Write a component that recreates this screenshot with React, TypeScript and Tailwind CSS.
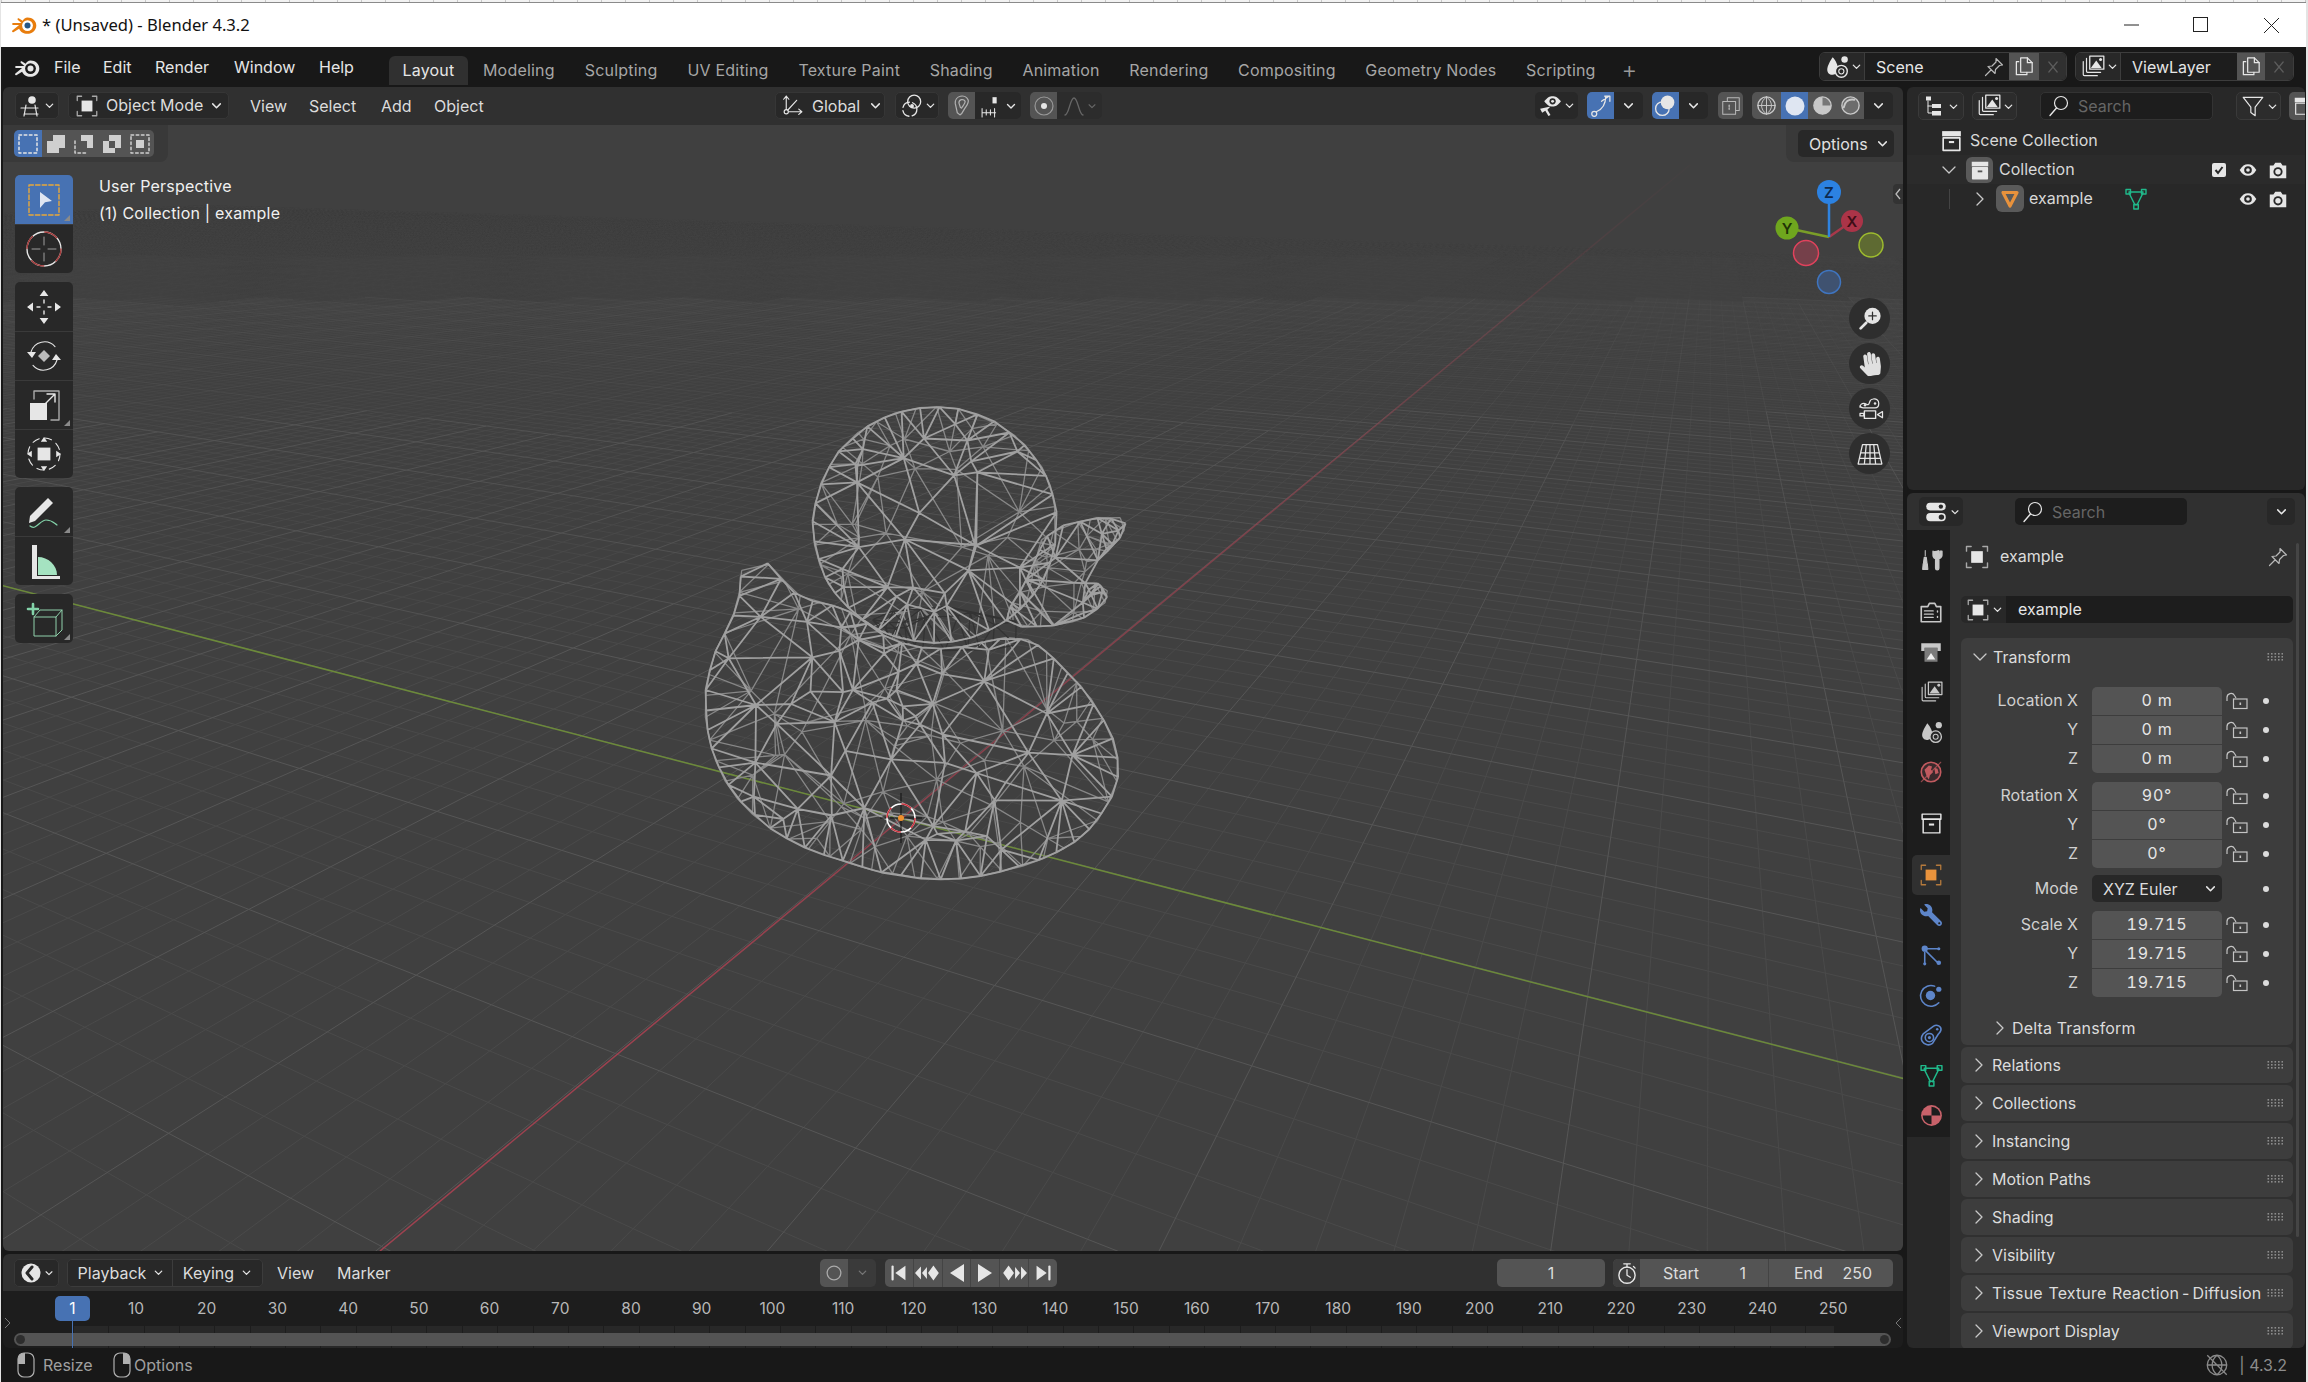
import React from "react";
import { FaHandPaper, FaWrench } from "react-icons/fa";

type P = [number, number];
const rng = (seed: number) => () => {
  seed = (seed + 0x6d2b79f5) | 0;
  let t = Math.imul(seed ^ (seed >>> 15), 1 | seed);
  t = (t + Math.imul(t ^ (t >>> 7), 61 | t)) ^ t;
  return ((t ^ (t >>> 14)) >>> 0) / 4294967296;
};
function delaunay(p: P[]) {
  const n = p.length;
  const pts: P[] = [...p, [-6000, -6000], [8000, -6000], [1000, 9000]];
  const mk = (a: number, b: number, c: number) => {
    const [ax, ay] = pts[a], [bx, by] = pts[b], [cx, cy] = pts[c];
    const d = 2 * (ax * (by - cy) + bx * (cy - ay) + cx * (ay - by));
    const A = ax * ax + ay * ay, B = bx * bx + by * by, C = cx * cx + cy * cy;
    const x = (A * (by - cy) + B * (cy - ay) + C * (ay - by)) / d;
    const y = (A * (cx - bx) + B * (ax - cx) + C * (bx - ax)) / d;
    return { a, b, c, x, y, r: (ax - x) ** 2 + (ay - y) ** 2 };
  };
  let ts = [mk(n, n + 1, n + 2)];
  for (let i = 0; i < n; i++) {
    const [x, y] = pts[i];
    const edges = new Map<string, [number, number]>();
    const good: typeof ts = [];
    for (const t of ts) {
      if ((x - t.x) ** 2 + (y - t.y) ** 2 < t.r) {
        for (const [u, v] of [[t.a, t.b], [t.b, t.c], [t.c, t.a]] as [number, number][]) {
          const k = u < v ? u + "_" + v : v + "_" + u;
          if (edges.has(k)) edges.delete(k);
          else edges.set(k, [u, v]);
        }
      } else good.push(t);
    }
    ts = good;
    edges.forEach((e) => ts.push(mk(e[0], e[1], i)));
  }
  return ts.filter((t) => t.a < n && t.b < n && t.c < n);
}
const inPoly = (q: P, poly: P[]) => {
  let c = false;
  for (let i = 0, j = poly.length - 1; i < poly.length; j = i++) {
    const [xi, yi] = poly[i], [xj, yj] = poly[j];
    if (yi > q[1] !== yj > q[1] && q[0] < ((xj - xi) * (q[1] - yi)) / (yj - yi) + xi) c = !c;
  }
  return c;
};
const chaikin = (poly: P[], times: number): P[] => {
  let cur = poly;
  for (let k = 0; k < times; k++) {
    const out: P[] = [];
    for (let i = 0; i < cur.length; i++) {
      const a = cur[i], b = cur[(i + 1) % cur.length];
      out.push([a[0] * 0.75 + b[0] * 0.25, a[1] * 0.75 + b[1] * 0.25]);
      out.push([a[0] * 0.25 + b[0] * 0.75, a[1] * 0.25 + b[1] * 0.75]);
    }
    cur = out;
  }
  return cur;
};
function mesh(poly: P[], center: P, n: number, seed: number, step: number) {
  const r = rng(seed);
  const bd: P[] = [];
  let acc = 0;
  for (let i = 0; i < poly.length; i++) {
    const a = poly[i], b = poly[(i + 1) % poly.length];
    const len = Math.hypot(b[0] - a[0], b[1] - a[1]);
    let pos = step - acc;
    while (pos < len) {
      const t = pos / len;
      bd.push([a[0] + (b[0] - a[0]) * t + (r() - 0.5) * 1.5, a[1] + (b[1] - a[1]) * t + (r() - 0.5) * 1.5]);
      pos += step * (0.7 + r() * 0.6);
    }
    acc = (acc + len) % step;
  }
  const pts: P[] = [...bd];
  for (let i = 0; i < n; i++) {
    const b = bd[Math.floor(r() * bd.length)];
    const t = Math.pow(r(), 0.55) * 0.93;
    pts.push([center[0] + (b[0] - center[0]) * t, center[1] + (b[1] - center[1]) * t]);
  }
  let d = "";
  const seen = new Set<string>();
  for (const t of delaunay(pts)) {
    const g: P = [(pts[t.a][0] + pts[t.b][0] + pts[t.c][0]) / 3, (pts[t.a][1] + pts[t.b][1] + pts[t.c][1]) / 3];
    if (!inPoly(g, poly)) continue;
    for (const [u, v] of [[t.a, t.b], [t.b, t.c], [t.c, t.a]] as [number, number][]) {
      const k = u < v ? u + "_" + v : v + "_" + u;
      if (seen.has(k)) continue;
      seen.add(k);
      d += `M${pts[u][0].toFixed(1)} ${pts[u][1].toFixed(1)}L${pts[v][0].toFixed(1)} ${pts[v][1].toFixed(1)}`;
    }
  }
  return d;
}
const F = (a: number[][]): P[] => a.map(([x, y]) => [680 + x / 3, 390 + y / 3]);
const bodyPoly = chaikin(F([[185, 515], [245, 500], [290, 550], [360, 630], [500, 650], [620, 750], [800, 790], [1030, 720], [1180, 860], [1270, 980], [1325, 1110], [1295, 1240], [1180, 1370], [1000, 1440], [800, 1475], [600, 1450], [350, 1370], [170, 1240], [90, 1080], [70, 920], [105, 780], [175, 660]]), 2);
const beakPoly = chaikin(F([[1100, 410], [1310, 375], [1345, 410], [1300, 470], [1180, 575], [1275, 585], [1290, 630], [1200, 695], [1040, 715], [960, 690], [1050, 560]]), 1);
const neckPoly = F([[560, 670], [800, 650], [1030, 700], [1000, 780], [760, 780], [620, 740]]);
const headPoly: P[] = Array.from({ length: 60 }, (_, i) => {
  const a = (i / 60) * Math.PI * 2;
  return [935 + 122 * Math.cos(a), 525 + 118 * Math.sin(a)] as P;
});
const B: P = [890, 745], H: P = [935, 525], K: P = [1080, 570];
const duckFront = [mesh(bodyPoly, B, 58, 11, 20), mesh(headPoly, H, 28, 21, 19), mesh(beakPoly, K, 14, 31, 16)];
const duckBack = [mesh(bodyPoly, B, 50, 12, 22), mesh(headPoly, H, 26, 22, 21), mesh(beakPoly, K, 12, 32, 14)];
const duckNeck = mesh(neckPoly, [880, 640], 12, 41, 26);

const VX: P = [1711, 148], VY: P = [-1687, 148], O: P = [900, 818];
function grid(k1: number, k2: number, div: number) {
  const buckets: string[] = ["", "", "", ""];
  const proj = (a: number, b: number): [number, number, number] => {
    const ka = a * k1, kb = b * k2, w = 1 + ka + kb;
    return [(O[0] + ka * VX[0] + kb * VY[0]) / w, (O[1] + ka * VX[1] + kb * VY[1]) / w, w];
  };
  const add = (a0: number, b0: number, a1: number, b1: number) => {
    const [x0, y0, w0] = proj(a0, b0), [x1, y1, w1] = proj(a1, b1);
    if (w0 < 0.12 || w1 < 0.12) return;
    const w = Math.max(w0, w1);
    if (w > 14) return;
    const i = w < 1.5 ? 0 : w < 2.6 ? 1 : w < 4.5 ? 2 : 3;
    buckets[i] += `M${x0.toFixed(1)} ${y0.toFixed(1)}L${x1.toFixed(1)} ${y1.toFixed(1)}`;
  };
  const R1 = 44, R2 = 70;
  for (let a = -R1; a <= R1; a += 1 / div) {
    if (div > 1 && Math.abs(a - Math.round(a)) < 1e-6) continue;
    for (let b = -R2; b < R2; b += 2) add(a, b, a, b + 2);
  }
  for (let b = -R2; b <= R2; b += 1 / div) {
    if (div > 1 && Math.abs(b - Math.round(b)) < 1e-6) continue;
    for (let a = -R1; a < R1; a += 2) add(a, b, a + 2, b);
  }
  return buckets;
}
const majorGrid = grid(0.13, 0.07, 1);
const minorGrid = grid(0.13, 0.07, 5);
const FADE = [1, 0.8, 0.4, 0.08];

const W = "#e6e6e6";
const Ico = ({ s = 22, children, className }: { s?: number; children: React.ReactNode; className?: string }) => (
  <svg width={s} height={s} viewBox="0 0 24 24" fill="none" stroke={W} strokeWidth={1.5} strokeLinecap="round" strokeLinejoin="round" className={"shrink-0 " + (className ?? "")}>
    {children}
  </svg>
);
const ChevD = ({ c = W, s = 13 }: { c?: string; s?: number }) => (
  <svg width={s} height={s} viewBox="0 0 12 12" fill="none" stroke={c} strokeWidth={1.4} strokeLinecap="round" strokeLinejoin="round" className="shrink-0">
    <path d="M2.5 4.5 6 8l3.5-3.5" />
  </svg>
);
const ChevR = ({ c = "#c8c8c8" }: { c?: string }) => (
  <svg width={14} height={16} viewBox="0 0 14 16" fill="none" stroke={c} strokeWidth={1.3} strokeLinecap="round" strokeLinejoin="round" className="shrink-0">
    <path d="M4 2l6 6-6 6" />
  </svg>
);
const ChevDL = ({ c = "#c8c8c8" }: { c?: string }) => (
  <svg width={16} height={14} viewBox="0 0 16 14" fill="none" stroke={c} strokeWidth={1.3} strokeLinecap="round" strokeLinejoin="round" className="shrink-0">
    <path d="M2 4l6 6 6-6" />
  </svg>
);
const Blender = ({ c = W, eye, s = 26 }: { c?: string; eye?: string; s?: number }) => (
  <svg width={s} height={s} viewBox="0 0 26 26" className="shrink-0">
    <path fill={c} d="M15.5 5.5c5 0 8.8 3.4 8.8 7.9 0 4.7-4 8.3-9 8.3-3.8 0-7-2-8.2-5L1.8 20c-.9.7-2 .1-1.7-1 .1-.3.3-.6.6-.8l6.4-5.1L1.3 13c-1.5 0-1.5-1.9 0-2h8.2L5.9 7.9c-1-.9.1-2.2 1.2-1.5l3.6 2.3c.9-1.9 2.6-3.2 4.8-3.2z" />
    <circle cx="15.5" cy="13.6" r="5.4" fill={eye ? "#fff" : "#181818"} />
    <circle cx="15.5" cy="13.6" r="3" fill={eye ?? c} />
  </svg>
);
const View3D = () => (
  <Ico s={24}>
    <circle cx="13" cy="6" r="3.8" fill={W} stroke="none" />
    <path d="M2 14h17M5 20h14M7 11l-2 11M16 11l2 11" strokeWidth={1.2} />
  </Ico>
);
const ObjBox = ({ c = W, s = 24, bc }: { c?: string; s?: number; bc?: string }) => (
  <Ico s={s}>
    <rect x="7" y="7" width="10" height="10" fill={c} stroke="none" />
    <path d="M3 7V3h4M17 3h4v4M21 17v4h-4M7 21H3v-4" stroke={bc ?? "#a8a8a8"} strokeWidth={1.2} />
  </Ico>
);
const Copy = () => (
  <Ico s={23}>
    <path d="M6 7H3.5v13.5h11V18" strokeWidth={1.3} />
    <path d="M8 3h7l5 5v10H8z" fill="none" strokeWidth={1.3} />
    <path d="M15 3v5h5" strokeWidth={1.3} />
  </Ico>
);
const PinI = ({ c = "#b8b8b8", s = 24 }: { c?: string; s?: number }) => (
  <Ico s={s}>
    <path d="M14 3.5l6.5 6.5-3 .5-4 4-.5 4-7-7 4-.5 4-4zM8.5 15.5L3.5 20.5" stroke={c} strokeWidth={1.2} />
  </Ico>
);
const XMark = ({ c = "#5c5c5c" }: { c?: string }) => (
  <Ico s={20}>
    <path d="M7 6l10 12M17 6L7 18" stroke={c} strokeWidth={1.5} />
  </Ico>
);
const SceneI = ({ s = 26, c = W }: { s?: number; c?: string }) => (
  <Ico s={s}>
    <path d="M8 3c3 3 5 8 5 11a5.2 5.2 0 0 1-4 5c-3 1-6-1.2-6-4.5C3 11 6 6 8 3z" fill={c} stroke="none" />
    <circle cx="19" cy="5" r="3" fill={c} stroke="none" />
    <circle cx="16" cy="16" r="5.5" fill="#282828" stroke={c} strokeWidth={1.3} />
    <circle cx="16" cy="16" r="2.4" stroke={c} strokeWidth={1} />
  </Ico>
);
const LayerI = ({ s = 26, c = W }: { s?: number; c?: string }) => (
  <Ico s={s}>
    <path d="M3 7v12a1 1 0 0 0 1 1h12M6 4v12a1 1 0 0 0 1 1h12" stroke={c} strokeWidth={1.1} />
    <rect x="9" y="2" width="13" height="12" fill="#282828" stroke={c} strokeWidth={1.2} />
    <path d="M10 13l5-7 5 7z" fill={c} stroke="none" />
    <circle cx="19" cy="5" r="1.4" fill={c} stroke="none" />
  </Ico>
);
const SearchI = ({ c = W, s = 24 }: { c?: string; s?: number }) => (
  <Ico s={s}>
    <circle cx="14" cy="9" r="6.5" stroke={c} strokeWidth={1.2} />
    <path d="M9.5 14L3 21.500" stroke={c} strokeWidth={1.4} />
  </Ico>
);
const Box = ({ active, s = 24 }: { active?: boolean; s?: number }) => (
  <Ico s={s}>
    <rect x="3" y="3" width="18" height="5" fill={W} stroke="none" />
    <rect x="4" y="9.5" width="16" height="12" fill={active ? W : "none"} stroke={W} strokeWidth={1.6} />
    <rect x="9.5" y="12.5" width="5" height="2" fill={active ? "#555" : W} stroke="none" />
  </Ico>
);
const EyeI = () => (
  <Ico s={20}>
    <path d="M2 12c3-5 6-7 10-7s7 2 10 7c-3 5-6 7-10 7s-7-2-10-7z" fill={W} stroke="none" />
    <circle cx="12" cy="12" r="4.6" fill="#282828" stroke="none" />
    <circle cx="12" cy="12" r="2.2" fill={W} stroke="none" />
  </Ico>
);
const CamI = () => (
  <Ico s={22}>
    <path d="M3 7h4l2-3h6l2 3h4v14H3z" fill={W} stroke="none" />
    <circle cx="12" cy="14" r="5" fill="#282828" stroke="none" />
    <circle cx="12" cy="14" r="3" fill={W} stroke="none" />
  </Ico>
);
const MeshI = ({ c = "#20b98b", s = 24 }: { c?: string; s?: number }) => (
  <Ico s={s}>
    <path d="M5 5h14M5 6l6 12M19 6l-6 12" stroke={c} strokeWidth={1.5} />
    <rect x="2" y="2.5" width="4.5" height="4.5" stroke={c} strokeWidth={1.4} />
    <rect x="17.5" y="2.5" width="4.5" height="4.5" stroke={c} strokeWidth={1.4} />
    <rect x="9.8" y="17.5" width="4.5" height="4.5" stroke={c} strokeWidth={1.4} />
  </Ico>
);
const Lock = () => (
  <svg width={22} height={18} viewBox="0 0 22 18" fill="none" stroke="#c4c4c4" strokeWidth={1.2} className="shrink-0">
    <path d="M1 9V5.5a4 4 0 0 1 7.5-2L10 6" />
    <rect x="7.5" y="7" width="13.5" height="9.5" />
    <rect x="13.5" y="10.5" width="1.6" height="2.5" fill="#c4c4c4" stroke="none" />
  </svg>
);
const Grip = () => (
  <svg width={16} height={8} viewBox="0 0 16 8" fill="#8c8c8c" className="shrink-0">
    {[0, 1, 2].map((r) => [0, 1, 2, 3, 4].map((c) => <rect key={r + "_" + c} x={c * 3.5 + 0.5} y={r * 3} width="1.6" height="1.6" />))}
  </svg>
);
const Dot = () => <span className="block w-[6px] h-[6px] rounded-full bg-[#dcdcdc] shrink-0" />;

const Seg = ({ className, children }: { className: string; children?: React.ReactNode }) => (
  <div className={"flex items-center justify-center shrink-0 " + className}>{children}</div>
);

const TABS = ["Layout", "Modeling", "Sculpting", "UV Editing", "Texture Paint", "Shading", "Animation", "Rendering", "Compositing", "Geometry Nodes", "Scripting"];

const TitleBar = () => (
  <div className="shrink-0">
    <div className="h-[3px] border-b border-[#8a8a8a] bg-[repeating-linear-gradient(90deg,#c8c8c8_0_1px,#f2f2f2_1px_24px)]" />
    <div className="h-[44px] bg-white flex items-center pl-[11px] text-[16.6px] text-[#111] font-['Noto_Sans',sans-serif] relative">
      <Blender c="#e87d0d" eye="#265787" s={26} />
      <span className="ml-[4px] pt-[1px]">* (Unsaved) - Blender 4.3.2</span>
      <div className="ml-auto flex items-center h-full">
        <svg width="16" height="16" viewBox="0 0 16 16" className="mr-[53px]"><path d="M0 8h15" stroke="#222" strokeWidth="1" /></svg>
        <svg width="16" height="16" viewBox="0 0 16 16" className="mr-[54px]"><rect x=".5" y=".5" width="14" height="14" stroke="#222" fill="none" /></svg>
        <svg width="17" height="17" viewBox="0 0 17 17" className="mr-[26px]"><path d="M1 1l15 15M16 1L1 16" stroke="#222" strokeWidth="1" /></svg>
      </div>
    </div>
  </div>
);

const TopBar = () => (
  <div className="h-[40px] shrink-0 bg-[#181818] flex text-[16px]">
    <div className="flex items-start pt-[8px] pl-[14px] w-[388px] shrink-0 text-[#e6e6e6]">
      <Blender />
      <span className="ml-[13px] w-[49px]">File</span>
      <span className="w-[52px]">Edit</span>
      <span className="w-[79px]">Render</span>
      <span className="w-[85px]">Window</span>
      <span>Help</span>
    </div>
    <div className="flex items-end h-[38px] self-start tracking-[0.2px]">
      {TABS.map((t, i) => (
        <div key={t} className={"h-[29px] flex items-center pb-[1px] rounded-t-[6px] " + (i === 0 ? "px-[13.5px] bg-[#303030] text-[#e6e6e6]" : i > 3 ? "px-[14.8px] text-[#a6a6a6]" : "px-[15px] text-[#a6a6a6]")}>{t}</div>
      ))}
      <div className="h-[29px] pl-[11px] flex items-center pb-[2px] text-[#9a9a9a] text-[24px] font-light">+</div>
    </div>
    <div className="ml-auto flex items-center text-[#e6e6e6] pb-[6px] pt-[5px] pr-[12px]">
      <div className="flex h-[29px] rounded-[6px] overflow-hidden border border-[#3d3d3d]">
        <Seg className="w-[44px] bg-[#282828] gap-[1px] pl-[2px]"><SceneI /><ChevD s={11} /></Seg>
        <div className="w-[145px] bg-[#1d1d1d] flex items-center pl-[11px] border-l border-[#3d3d3d]">
          <span>Scene</span><span className="ml-auto mr-[3px]"><PinI /></span>
        </div>
        <Seg className="w-[30px] bg-[#545454]"><Copy /></Seg>
        <Seg className="w-[27px] bg-[#303030]"><XMark /></Seg>
      </div>
      <div className="flex h-[29px] rounded-[6px] overflow-hidden border border-[#3d3d3d] ml-[8px]">
        <Seg className="w-[44px] bg-[#282828] gap-[1px] pl-[2px]"><LayerI /><ChevD s={11} /></Seg>
        <div className="w-[117px] bg-[#1d1d1d] flex items-center pl-[11px] border-l border-[#3d3d3d]">ViewLayer</div>
        <Seg className="w-[28px] bg-[#545454]"><Copy /></Seg>
        <Seg className="w-[28px] bg-[#303030]"><XMark /></Seg>
      </div>
    </div>
  </div>
);

const ModeIcon = ({ kind }: { kind: number }) => {
  const dash = <rect x="3" y="3" width="18" height="18" strokeDasharray="2.6 2.6" stroke={W} strokeWidth={1.5} fill="none" />;
  return (
    <Ico s={24}>
      {kind === 0 && dash}
      {kind === 1 && <path d="M9 3h12v13h-6v5H3V9h6z" fill="#cfcfcf" stroke="none" />}
      {kind === 2 && <><path d="M3 9v12h12" strokeDasharray="2.5 2.5" stroke="#cfcfcf" /><path d="M9 3h12v13h-6V9H9z" fill="#cfcfcf" stroke="none" /></>}
      {kind === 3 && <path fillRule="evenodd" d="M9 3h12v13h-6v5H3V9h6zM9 9v7h6V9z" fill="#cfcfcf" stroke="none" />}
      {kind === 4 && <><rect x="3" y="3" width="18" height="18" strokeDasharray="2.6 2.6" stroke="#cfcfcf" /><rect x="8" y="8" width="8" height="8" fill="#cfcfcf" stroke="none" /></>}
    </Ico>
  );
};
const ShadeGlobe = () => <Ico s={23}><circle cx="12" cy="12" r="9" stroke="#c8c8c8" /><path d="M3 12h18M12 3v18M12 3c-7 5-7 13 0 18M12 3c7 5 7 13 0 18" stroke="#c8c8c8" strokeWidth={1} /></Ico>;

const ViewHeader = () => (
  <div className="h-[38px] shrink-0 bg-[#303030] rounded-t-[6px] flex items-center text-[16px] text-[#dcdcdc] pb-[1px]">
    <Seg className="ml-[12px] w-[44px] h-[27px] bg-[#282828] rounded-[5px] border border-[#363636] gap-[1px]"><View3D /><ChevD s={11} /></Seg>
    <Seg className="ml-[9px] w-[161px] h-[27px] bg-[#282828] rounded-[5px] border border-[#363636] !justify-start pl-[5px]">
      <ObjBox s={26} /><span className="ml-[6px] w-[104px] pb-[1px]">Object Mode</span><ChevD s={13} />
    </Seg>
    <span className="ml-[21px] w-[59px]">View</span>
    <span className="w-[72px]">Select</span>
    <span className="w-[53px]">Add</span>
    <span className="w-[60px]">Object</span>

    <Seg className="ml-[281px] w-[110px] h-[27px] bg-[#282828] rounded-[5px] border border-[#363636] !justify-start pl-[4px]">
      <Ico s={25}><path d="M6 3v15h15M6 18L16 7M3.5 6L6 3l2.5 3M18 15.5l3 2.5-3 2.5" strokeWidth={1.1} /><circle cx="6" cy="18" r="2" fill="#282828" strokeWidth={1.1} /></Ico>
      <span className="ml-[7px] w-[57px]">Global</span><ChevD s={13} />
    </Seg>
    <Seg className="ml-[10px] w-[44px] h-[27px] bg-[#282828] rounded-[5px] border border-[#363636]">
      <Ico s={26}><circle cx="10" cy="15" r="6.5" strokeWidth={1.2} strokeDasharray="8 3" /><circle cx="14" cy="8" r="6" strokeWidth={1.2} /><circle cx="12" cy="12" r="1.8" fill={W} stroke="none" /></Ico>
      <ChevD s={11} />
    </Seg>
    <div className="ml-[9px] w-[73px] h-[27px] flex rounded-[5px] overflow-hidden">
      <Seg className="w-[27px] bg-[#545454]"><Ico s={25}><path d="M8 19L6 10A6.500 6.500 0 0 1 18.500 7c.5 3-2 5.500-3.500 8l-3 5-1.500 1zM11 14L9.500 9.500A3.200 3.200 0 0 1 15.500 8c.3 2-2 4-3.500 6.500" stroke="#b0b0b0" strokeWidth={1.2} /></Ico></Seg>
      <Seg className="flex-1 bg-[#282828]">
        <Ico s={25}><path d="M2 19h13M2 15v8M6 16v5M10 16v5M14 15v8" strokeWidth={1} /><rect x="12" y="4" width="4" height="6" fill={W} stroke="none" /></Ico>
        <ChevD s={12} />
      </Seg>
    </div>
    <div className="ml-[9px] w-[72px] h-[27px] flex rounded-[5px] overflow-hidden">
      <Seg className="w-[27px] bg-[#545454]"><Ico s={24}><circle cx="12" cy="12" r="9" stroke="#999" strokeWidth={1.2} /><circle cx="12" cy="12" r="3" fill={W} stroke="none" /></Ico></Seg>
      <Seg className="flex-1 bg-[#2c2c2c]"><Ico s={24}><path d="M2 21c4 0 5-17 9-17s5 17 9 17" stroke="#666" strokeWidth={1.3} /></Ico><ChevD s={10} c="#666" /></Seg>
    </div>

    <Seg className="ml-[433px] w-[43px] h-[27px] bg-[#282828] rounded-[5px] gap-[1px]">
      <Ico s={25}><path d="M3 13l10-2-3 3 3 5-2 1-3-5-3 2z" fill={W} stroke="none" transform="translate(-1 2)" /><path d="M6 8c3-4 5-5 8-5s5 1 8 5c-3 4-5 5-8 5s-5-1-8-5z" fill={W} stroke="none" /><circle cx="14" cy="8" r="3" fill="#282828" stroke="none" /><circle cx="14" cy="8" r="1.4" fill={W} stroke="none" /></Ico>
      <ChevD s={11} />
    </Seg>
    <div className="ml-[9px] w-[56px] h-[27px] flex rounded-[5px] overflow-hidden">
      <Seg className="w-[27px] bg-[#4772b3]"><Ico s={25}><circle cx="6" cy="20" r="2.4" strokeWidth={1.2} /><path d="M8 18C15 15 17 10 17 3M13 8l7-5M21 3h-5M21 3v5" strokeWidth={1.2} /></Ico></Seg>
      <Seg className="flex-1 bg-[#282828]"><ChevD s={13} /></Seg>
    </div>
    <div className="ml-[9px] w-[56px] h-[27px] flex rounded-[5px] overflow-hidden">
      <Seg className="w-[27px] bg-[#4772b3]"><Ico s={25}><circle cx="9" cy="15" r="6.5" strokeWidth={1.3} /><circle cx="14" cy="9" r="6.5" fill={W} stroke="none" /></Ico></Seg>
      <Seg className="flex-1 bg-[#282828]"><ChevD s={13} /></Seg>
    </div>
    <Seg className="ml-[10px] w-[25px] h-[27px] bg-[#545454] rounded-[5px]"><Ico s={22}><path d="M8 7V3h13v14h-4" stroke="#b8b8b8" strokeWidth={1.1} /><rect x="3" y="7" width="14" height="14" stroke="#b8b8b8" strokeWidth={1.1} /><path d="M10 11v6" stroke="#b8b8b8" strokeDasharray="1.5 1.5" /></Ico></Seg>
    <div className="ml-[9px] w-[141px] h-[27px] flex rounded-[5px] overflow-hidden">
      <Seg className="w-[29px] bg-[#545454]"><ShadeGlobe /></Seg>
      <Seg className="w-[27px] bg-[#4772b3]"><Ico s={24}><circle cx="12" cy="12" r="9.500" fill="#dfe6f2" stroke="none" /></Ico></Seg>
      <Seg className="w-[29px] bg-[#545454]"><Ico s={23}><circle cx="12" cy="12" r="9" fill="#777" stroke="#c8c8c8" /><path d="M12 3a9 9 0 1 0 9 9h-9z" fill="#c8c8c8" stroke="none" /></Ico></Seg>
      <Seg className="w-[27px] bg-[#545454]"><Ico s={23}><circle cx="12" cy="12" r="9" fill="#6c6c6c" stroke="#c8c8c8" /><path d="M5 14c1-6 5-9 11-8" stroke="#c8c8c8" strokeWidth={2} /></Ico></Seg>
      <Seg className="flex-1 bg-[#282828]"><ChevD s={13} /></Seg>
    </div>
  </div>
);

const ToolBtn = ({ children, blue, corner, top, bottom }: { children: React.ReactNode; blue?: boolean; corner?: boolean; top?: boolean; bottom?: boolean }) => (
  <div className={"w-[58px] h-[49px] flex items-center justify-center relative " + (blue ? "bg-[#4772b3] " : "bg-[#282828] ") + (top ? "rounded-t-[5px] " : "") + (bottom ? "rounded-b-[5px] " : "") + (top ? "" : "border-t border-[#3a3a3a]")}>
    {children}
    {corner && <span className="absolute right-[3px] bottom-[3px] w-0 h-0 border-l-[6px] border-l-transparent border-b-[6px] border-b-[#8a8a8a]" />}
  </div>
);

const Tools = () => (
  <div className="absolute left-[12px] top-[50px] flex flex-col">
    <div className="flex flex-col">
      <ToolBtn blue top corner>
        <Ico s={48}><rect x="4.500" y="4.500" width="15" height="15" stroke="#e8a83a" strokeWidth={.7} strokeDasharray="2.2 1.100" /><path d="M10 8l6 4.500-3.500.6-2.500 2.900z" fill="#dfe6f2" stroke="none" /></Ico>
      </ToolBtn>
      <ToolBtn bottom>
        <Ico s={48}><circle cx="12" cy="12" r="8.500" stroke={W} strokeWidth={.7} /><circle cx="12" cy="12" r="8.500" stroke="#a33a3a" strokeWidth={.7} strokeDasharray="6.700 6.700" /><path d="M12 6v4M12 14v4M6 12h4M14 12h4" stroke="#aaa" strokeWidth={.45} /></Ico>
      </ToolBtn>
    </div>
    <div className="flex flex-col mt-[9px]">
      <ToolBtn top>
        <Ico s={48}><path d="M12 3.500l2.200 3h-4.400zM12 20.500l-2.200-3h4.400zM3.500 12l3-2.200v4.400zM20.500 12l-3 2.200V9.800z" fill={W} stroke="none" /><path d="M12 8.500v1.500M12 14v1.500M8.500 12H10M14 12h1.500" strokeWidth={.7} /></Ico>
      </ToolBtn>
      <ToolBtn>
        <Ico s={48}><path d="M12 9l3 3-3 3-3-3z" fill="#bbb" stroke="none" /><path d="M5.500 10a7 7 0 0 1 12-2.700M18.500 14a7 7 0 0 1-12 2.700" strokeWidth={.55} /><path d="M3.500 10l2.500 3 2-3zM20.500 14l-2.500-3-2 3z" fill={W} stroke="none" /></Ico>
      </ToolBtn>
      <ToolBtn corner>
        <Ico s={48}><rect x="5" y="11" width="8.500" height="8.500" fill={W} stroke="none" /><path d="M7 9V5h12.500v14.500H15.500" stroke="#aaa" strokeWidth={.7} /><path d="M12 12l5-5M13.500 6.500h4v4" strokeWidth={.7} /></Ico>
      </ToolBtn>
      <ToolBtn bottom>
        <Ico s={48}><rect x="8.800" y="8.800" width="6.400" height="6.400" fill={W} stroke="none" /><circle cx="12" cy="12" r="8" strokeWidth={.55} strokeDasharray="3.500 2.800" /><path d="M12 3.500l1.600 2.400h-3.200zM12 20.500l-1.600-2.400h3.200zM3.500 12l2.400-1.600v3.200zM20.500 12l-2.400 1.600v-3.200z" fill={W} stroke="none" /></Ico>
      </ToolBtn>
    </div>
    <div className="flex flex-col mt-[9px]">
      <ToolBtn top corner>
        <Ico s={48}><path d="M5 14L14 5l2.500 2.500-9 9-3 1z" fill={W} stroke="none" /><path d="M5 19c3 2.500 5-3 8-3s4 1.500 5.500 2.500" stroke="#83d3a9" strokeWidth={.6} /></Ico>
      </ToolBtn>
      <ToolBtn bottom>
        <Ico s={48}><path d="M6 4h2.500v15.500H20V21H6z" fill={W} stroke="none" /><path d="M9 19V10c5 0 9.500 4 9.500 9z" fill="#a5e3c1" stroke="none" /></Ico>
      </ToolBtn>
    </div>
    <div className="mt-[9px]">
      <ToolBtn top bottom corner>
        <Ico s={48}><path d="M6.500 4.500v5M4 7h5" stroke="#83d3a9" strokeWidth={1.300} /><path d="M7 11v9.500h11l3-3V7.500H10l-3 3.500h11v9.500M18 11l3-3.500" stroke="#8fd1ab" strokeWidth={.5} /></Ico>
      </ToolBtn>
    </div>
  </div>
);

const Canvas = () => (
  <svg className="absolute inset-0" width="1900" height="1126" viewBox="3 125 1900 1126">
    <defs>
      <linearGradient id="redFade" gradientUnits="userSpaceOnUse" x1="600" y1="1066" x2="1680" y2="172">
        <stop offset="0" stopColor="#a44150" stopOpacity=".95" />
        <stop offset=".6" stopColor="#a44150" stopOpacity=".6" />
        <stop offset="1" stopColor="#a44150" stopOpacity="0.03" />
      </linearGradient>
    </defs>
    {minorGrid.map((d, i) => <path key={"m" + i} d={d} stroke="#4a4a4a" strokeWidth="1" opacity={FADE[i]} fill="none" />)}
    {majorGrid.map((d, i) => <path key={"M" + i} d={d} stroke="#565656" strokeWidth="1" opacity={FADE[i]} fill="none" />)}
    <path d="M380 1251L1690 165" stroke="url(#redFade)" strokeWidth="1.500" />
    <path d="M0 585L1905 1079" stroke="#6c8a3a" strokeWidth="1.500" />
    {duckBack.map((d, i) => <path key={"b" + i} d={d} stroke="#878787" strokeWidth="1.300" fill="none" />)}
    <path d={duckNeck} stroke="#333" strokeWidth="1.300" fill="none" />
    {duckFront.map((d, i) => <path key={"f" + i} d={d} stroke="#a0a0a0" strokeWidth="1.800" fill="none" />)}
    <g fill="none">
      <path d="M901 793v50M880 818h42" stroke="#111" strokeWidth="1" />
      <circle cx="901" cy="818" r="14" stroke="#fff" strokeWidth="1.500" />
      <circle cx="901" cy="818" r="14" stroke="#c9333f" strokeWidth="1.500" strokeDasharray="11 11" />
      <circle cx="901" cy="818" r="3" fill="#f0902e" stroke="none" />
    </g>
    <g fontFamily="Inter, sans-serif" fontWeight="600" fontSize="15" textAnchor="middle">
      <circle cx="1806" cy="253" r="12.500" fill="#75404a" stroke="#e0425c" strokeWidth="1.500" />
      <circle cx="1871" cy="245" r="12" fill="#5e6a32" stroke="#9dbb2e" strokeWidth="1.500" />
      <circle cx="1829" cy="282" r="11.500" fill="#3f5270" stroke="#3f75c0" strokeWidth="1.500" />
      <path d="M1829 237L1787 228" stroke="#7a9e28" strokeWidth="2.500" />
      <path d="M1829 237L1852 221" stroke="#a8384a" strokeWidth="2.500" />
      <path d="M1829 237V192" stroke="#2f83e0" strokeWidth="2.500" />
      <circle cx="1852" cy="221" r="11" fill="#ab3448" />
      <text x="1852" y="226.500" fill="#3d0d16">X</text>
      <circle cx="1787" cy="228" r="11.500" fill="#6fa61e" />
      <text x="1787" y="233.500" fill="#1f3306">Y</text>
      <circle cx="1829" cy="192" r="12" fill="#2c82e2" />
      <text x="1829" y="197.500" fill="#0d2a50">Z</text>
    </g>
  </svg>
);

const NavBtn = ({ children }: { children: React.ReactNode }) => (
  <div className="w-[41px] h-[41px] rounded-full bg-[#2e2e2e] flex items-center justify-center">{children}</div>
);

const Viewport = () => (
  <div className="flex-1 min-h-0 flex flex-col">
    <ViewHeader />
    <div className="flex-1 relative bg-[#404040] rounded-b-[6px] overflow-hidden">
      <Canvas />
      <div className="absolute top-0 left-0 w-[165px] h-[37px] bg-[#393939] rounded-br-[8px] pl-[11px] pt-[5px] flex">
        <div className="flex h-[27px] rounded-[5px] overflow-hidden">
          {[0, 1, 2, 3, 4].map((k) => (
            <Seg key={k} className={"w-[28px] " + (k === 0 ? "bg-[#4772b3]" : "bg-[#545454]")}><ModeIcon kind={k} /></Seg>
          ))}
        </div>
      </div>
      <div className="absolute top-0 right-0 w-[117px] h-[37px] bg-[#393939] rounded-bl-[8px] pt-[5px] pl-[12px] text-[16px] text-[#e0e0e0]">
        <div className="w-[96px] h-[27px] rounded-[5px] bg-[#282828] flex items-center pl-[11px] gap-[8px]">Options<ChevD s={13} /></div>
      </div>
      <Tools />
      <div className="absolute left-[96px] top-[48px] text-[16px] leading-[27px] text-[#f0f0f0] tracking-[0.2px]">
        <div>User Perspective</div>
        <div>(1) Collection | example</div>
      </div>
      <div className="absolute right-0 top-[59px] w-[10px] h-[20px] bg-[#333] rounded-l-[4px] flex items-center justify-center">
        <svg width="8" height="12" viewBox="0 0 8 12" fill="none" stroke="#bbb" strokeWidth="1.300"><path d="M6 1L2 6l4 5" /></svg>
      </div>
      <div className="absolute left-[1846px] top-[173px] flex flex-col gap-[4px]">
        <NavBtn>
          <Ico s={30}>
            <circle cx="14" cy="9.500" r="6.500" fill="#e4e4e4" stroke="none" />
            <path d="M9 15l-4.500 4.500" stroke="#e4e4e4" strokeWidth={2.200} />
            <path d="M14 6.500v6M11 9.500h6" stroke="#2e2e2e" strokeWidth={1} />
          </Ico>
        </NavBtn>
        <NavBtn><FaHandPaper size={24} color="#e0e0e0" className="-rotate-[8deg]" /></NavBtn>
        <NavBtn>
          <Ico s={30}>
            <path d="M4 10.500a3 3 0 0 1 3-3c2 0 2.500 1.500 3.500 1 2-.9 0-4 4-4.500a3.500 3.500 0 0 1 4.500 3.500c0 2-1 3.500-3 3.500H7a3 3 0 0 1-3-1.500z" strokeWidth={1} />
            <circle cx="8" cy="9" r="1" fill={W} stroke="none" /><circle cx="16" cy="7.500" r="1" fill={W} stroke="none" />
            <rect x="7.500" y="13.500" width="9" height="6" strokeWidth={1.100} />
            <path d="M4 15.500h3v2H4zM22 14l-4 2.500 4 2.500z" strokeWidth={1} />
          </Ico>
        </NavBtn>
        <NavBtn>
          <Ico s={30}><path d="M6 4.500h12L21.500 20h-19zM12 4.500V20M4.500 11h15M3.500 15.500h17M9 4.500l-1.500 15.500M15 4.500l1.500 15.500" strokeWidth={1} /></Ico>
        </NavBtn>
      </div>
    </div>
  </div>
);

const Timeline = () => (
  <div className="h-[94px] mt-[3px] shrink-0 rounded-[6px] overflow-hidden flex flex-col text-[16px] text-[#dcdcdc]">
    <div className="h-[37px] bg-[#303030] flex items-center shrink-0">
      <Seg className="ml-[11px] w-[45px] h-[28px] bg-[#282828] rounded-[5px] border border-[#383838] gap-[1px]">
        <Ico s={24}><circle cx="12" cy="12" r="9.500" fill={W} stroke="none" /><path d="M13 6l-5 6 5 6" stroke="#282828" strokeWidth={3} /></Ico><ChevD s={10} />
      </Seg>
      <div className="ml-[8px] w-[196px] h-[28px] flex rounded-[5px] overflow-hidden border border-[#3c3c3c]">
        <Seg className="w-[104px] bg-[#282828] gap-[7px] pl-[2px]">Playback<ChevD s={11} /></Seg>
        <Seg className="flex-1 bg-[#282828] border-l border-[#3c3c3c] gap-[7px]">Keying<ChevD s={11} /></Seg>
      </div>
      <span className="ml-[14px] w-[60px]">View</span>
      <span className="w-[60px]">Marker</span>
      <div className="ml-[423px] w-[56px] h-[28px] flex rounded-[5px] overflow-hidden">
        <Seg className="w-[28px] bg-[#545454]"><Ico s={22}><circle cx="12" cy="12" r="7.500" stroke="#aaa" strokeWidth={1.400} /></Ico></Seg>
        <Seg className="flex-1 bg-[#3a3a3a]"><ChevD s={11} c="#777" /></Seg>
      </div>
      <div className="ml-[9px] w-[172px] h-[28px] flex rounded-[5px] overflow-hidden bg-[#545454]">
        <Seg className="flex-1"><Ico s={22}><path d="M5 5v14" strokeWidth={2.400} /><path d="M19 4L8 12l11 8z" fill={W} stroke="none" /></Ico></Seg>
        <Seg className="flex-1 border-l border-[#444]"><Ico s={26}><path d="M12 12l5-7 5 7-5 7zM0 12l5.500-6v12zM6.500 12L11 6.500v11z" fill={W} stroke="none" /></Ico></Seg>
        <Seg className="flex-1 border-l border-[#444]"><Ico s={24}><path d="M19 3L5 12l14 9z" fill={W} stroke="none" /></Ico></Seg>
        <Seg className="flex-1 border-l border-[#444]"><Ico s={24}><path d="M5 3l14 9-14 9z" fill={W} stroke="none" /></Ico></Seg>
        <Seg className="flex-1 border-l border-[#444]"><Ico s={26}><path d="M12 12L7 5l-5 7 5 7zM24 12l-5.500-6v12zM17.500 12L13 6.500v11z" fill={W} stroke="none" /></Ico></Seg>
        <Seg className="flex-1 border-l border-[#444]"><Ico s={22}><path d="M19 5v14" strokeWidth={2.400} /><path d="M5 4l11 8-11 8z" fill={W} stroke="none" /></Ico></Seg>
      </div>
      <Seg className="ml-[440px] w-[108px] h-[28px] bg-[#545454] rounded-[5px]">1</Seg>
      <div className="ml-[8px] w-[280px] h-[28px] flex rounded-[5px] overflow-hidden bg-[#545454]">
        <Seg className="w-[27px] bg-[#3d3d3d]"><Ico s={26}><circle cx="12" cy="14" r="7.500" strokeWidth={1.300} /><path d="M12 9v5l3 2M9 3.500h6M12 3.500v3M18 6l1.500 1.500" strokeWidth={1.200} /></Ico></Seg>
        <div className="w-[129px] flex items-center pl-[23px] pr-[22px] justify-between border-r border-[#444]"><span>Start</span><span>1</span></div>
        <div className="flex-1 flex items-center pl-[25px] pr-[21px] justify-between"><span>End</span><span>250</span></div>
      </div>
    </div>
    <div className="flex-1 bg-[#1d1d1d] relative">
      <div className="flex pt-[6px] pl-[97.6px] text-[15.500px] text-[#b8b8b8] leading-[24px]">
        {Array.from({ length: 25 }, (_, i) => (
          <span key={i} className="w-[70.72px] shrink-0 text-center">{(i + 1) * 10}</span>
        ))}
      </div>
      <div className="absolute left-[70px] right-[69px] top-[35px] bottom-0 bg-[#282828] bg-[repeating-linear-gradient(90deg,#1d1d1d_0_1px,transparent_1px_35.35px)]" />
      <div className="absolute left-[11px] right-[12px] top-[42px] h-[13px] rounded-full bg-[#545454] flex items-center justify-between px-[2px]">
        <span className="w-[9px] h-[9px] rounded-full bg-[#2d2d2d]" />
        <span className="w-[9px] h-[9px] rounded-full bg-[#2d2d2d]" />
      </div>
      <div className="absolute left-[69px] top-[29px] bottom-0 w-[1px] bg-[#4772b3]" />
      <div className="absolute left-[52px] top-[5px] w-[35px] h-[25px] rounded-[5px] bg-[#4772b3] flex items-center justify-center text-[#fff] text-[15.500px]">1</div>
      <svg className="absolute left-[1px] top-[26px]" width="7" height="12" viewBox="0 0 7 12" fill="none" stroke="#777"><path d="M1 1l5 5-5 5" /></svg>
      <svg className="absolute right-[1px] top-[26px]" width="7" height="12" viewBox="0 0 7 12" fill="none" stroke="#777"><path d="M6 1L1 6l5 5" /></svg>
    </div>
  </div>
);

const OutRow = ({ odd, children }: { odd?: boolean; children: React.ReactNode }) => (
  <div className={"h-[29px] flex items-center relative " + (odd ? "bg-[#2b2b2b]" : "")}>{children}</div>
);
const Outliner = () => (
  <div className="h-[403px] shrink-0 bg-[#282828] rounded-[6px] overflow-hidden text-[16px] text-[#d8d8d8]">
    <div className="h-[38px] flex items-center pl-[11px]">
      <Seg className="w-[46px] h-[28px] bg-[#2c2c2c] rounded-[5px] border border-[#3a3a3a] gap-[1px]">
        <Ico s={24}><rect x="3" y="2.500" width="5" height="4" fill={W} stroke="none" /><rect x="9" y="10" width="9" height="4" fill={W} stroke="none" /><rect x="9" y="17" width="9" height="4.500" fill={W} stroke="none" /><path d="M5 7v12h4M5 12h4" strokeWidth={1} /></Ico><ChevD s={11} />
      </Seg>
      <Seg className="ml-[8px] w-[45px] h-[28px] bg-[#2c2c2c] rounded-[5px] border border-[#3a3a3a] gap-[1px]"><LayerI /><ChevD s={11} /></Seg>
      <div className="ml-[23px] w-[173px] h-[28px] bg-[#1d1d1d] rounded-[5px] border border-[#333] flex items-center pl-[6px] gap-[7px] text-[#666] shrink-0"><SearchI />Search</div>
      <Seg className="ml-[23px] w-[45px] h-[28px] bg-[#2c2c2c] rounded-[5px] border border-[#3a3a3a] gap-[1px]">
        <Ico s={26}><path d="M3 4h18l-7 9v8l-4-3v-5z" strokeWidth={1.100} /></Ico><ChevD s={11} />
      </Seg>
      <Seg className="ml-[8px] w-[16px] h-[28px] bg-[#545454] rounded-l-[5px] !justify-start pl-[3px] overflow-hidden">
        <Ico s={22}><rect x="3" y="3" width="18" height="5" fill={W} stroke="none" /><rect x="4" y="9" width="16" height="12" strokeWidth={1.300} /></Ico>
      </Seg>
    </div>
    <div className="h-[1px]" />
    <OutRow>
      <span className="ml-[32px]"><Box s={25} /></span>
      <span className="ml-[6px] pb-[1px]">Scene Collection</span>
    </OutRow>
    <OutRow odd>
      <span className="ml-[34px]"><ChevDL /></span>
      <span className="ml-[9px] w-[27px] h-[26px] rounded-[6px] bg-[#5a5a5a] flex items-center justify-center"><Box s={22} active /></span>
      <span className="ml-[6px] pb-[1px]">Collection</span>
      <span className="absolute left-[305px] w-[14px] h-[14px] rounded-[2px] bg-[#e6e6e6] flex items-center justify-center">
        <svg width="12" height="12" viewBox="0 0 12 12" fill="none" stroke="#282828" strokeWidth="2"><path d="M2.500 6l2.500 3 4.500-6" /></svg>
      </span>
      <span className="absolute left-[331px]"><EyeI /></span>
      <span className="absolute left-[360px]"><CamI /></span>
    </OutRow>
    <OutRow>
      <span className="ml-[42px] w-[1px] h-[20px] bg-[#444]" />
      <span className="ml-[23px]"><ChevR /></span>
      <span className="ml-[9px] w-[28px] h-[27px] rounded-[6px] bg-[#5a5a5a] flex items-center justify-center">
        <svg width="20" height="20" viewBox="0 0 20 20" fill="none" stroke="#e8923c" strokeWidth="3.200" strokeLinejoin="round"><path d="M3 3.500h14L10 17z" /></svg>
      </span>
      <span className="ml-[5px] pb-[1px]">example</span>
      <span className="absolute left-[217px]"><MeshI /></span>
      <span className="absolute left-[331px]"><EyeI /></span>
      <span className="absolute left-[360px]"><CamI /></span>
    </OutRow>
  </div>
);

const Tab = ({ children, active }: { children: React.ReactNode; active?: boolean }) => (
  <div className={"h-[40px] flex items-center justify-center ml-[5px] w-[38px] " + (active ? "bg-[#303030] rounded-l-[5px]" : "")}>{children}</div>
);
const C2 = "#c8c8c8";
const PropTabs = () => (
  <div className="w-[43px] shrink-0 bg-[#282828] flex flex-col">
    <div className="bg-[#1d1d1d] pt-[10px] pb-[2px] flex flex-col">
      <Tab><Ico s={25}><path d="M6 2.500v5M4 15a3 3 0 0 1 4 0l.5 5.500h-5zM5 9h2l.7 5H4.300z" fill={C2} stroke={C2} strokeWidth={1} /><path d="M13.500 3v4c0 2 1.500 3 2.500 3v9.500a1.300 1.300 0 0 0 3 0V10c1 0 3-1 3-3V3l-2 0v3h-1.500V2.500" stroke={C2} strokeWidth={1.400} fill={C2} /></Ico></Tab>
      <div className="mt-[12px]"><Tab><Ico s={26}><path d="M3 7h6l1.500-3h5L17 7h4v14H3z" stroke={C2} fill="#1d1d1d" strokeWidth={1.500} /><path d="M6 11h8M6 14h8M6 17h8M18 11v1M18 16v1" stroke={C2} strokeWidth={1.300} /></Ico></Tab></div>
      <Tab><Ico s={26}><path d="M3 4h18v7h-3V8H6v3H3z" fill={C2} stroke="none" /><rect x="6" y="8" width="12" height="13" fill={C2} stroke="none" opacity=".55" /><path d="M8 19l4-6 4 6z" fill="#eee" stroke="none" /></Ico></Tab>
      <Tab><LayerI s={25} c={C2} /></Tab>
      <Tab><SceneI s={25} c={C2} /></Tab>
      <Tab><Ico s={26}><circle cx="12" cy="12" r="9" fill="#3a2a2c" stroke="#c15a5f" strokeWidth={1.500} /><path d="M6 10l4-4 3 1-1 3 2 2-3 3-1 4-2-3zM15 8l3 1 1 4-3 1z" fill="#c15a5f" stroke="none" /><path d="M3 21L21 3" stroke="#c15a5f" strokeWidth={1} opacity=".7" /></Ico></Tab>
      <div className="mt-[11px]"><Tab><Ico s={25}><rect x="3" y="3" width="18" height="5" stroke={W} strokeWidth={1.400} /><rect x="4" y="8" width="16" height="13" stroke={W} strokeWidth={1.400} /><rect x="9.500" y="12" width="5" height="2" fill={W} stroke="none" /></Ico></Tab></div>
      <div className="mt-[12px]"><Tab active><ObjBox c="#e8923c" bc="#b57a3c" s={26} /></Tab></div>
      <Tab><FaWrench size={22} color="#5d85c9" className="-scale-y-100 rotate-180" /></Tab>
      <Tab><Ico s={25}><circle cx="5.500" cy="5.500" r="3" fill="#5d85c9" stroke="none" /><path d="M8 5.500h10M7 8l11 11M5.500 9v10" stroke="#5d85c9" strokeWidth={1.500} /><circle cx="19" cy="5.500" r="1.500" fill="#5d85c9" stroke="none" /><circle cx="19" cy="19" r="2.200" fill="#5d85c9" stroke="none" /><circle cx="5.500" cy="20" r="1.500" fill="#5d85c9" stroke="none" /></Ico></Tab>
      <Tab><Ico s={25}><path d="M19 19A10 10 0 1 1 15 3" stroke="#5d85c9" strokeWidth={1.500} /><circle cx="11" cy="12" r="4.500" fill="#5d85c9" stroke="none" /><circle cx="19" cy="6" r="2.500" fill="#5d85c9" stroke="none" /></Ico></Tab>
      <Tab><Ico s={25}><path d="M4 10.500L14 3c3-2 8 0 7 4-.5 2-2 3-3 4.500l-5 8c-4 3-8 1-10-2-1-2-.5-5 1-7z" stroke="#5d85c9" strokeWidth={1.500} /><circle cx="10" cy="14" r="4" stroke="#5d85c9" strokeWidth={1.500} /><circle cx="10" cy="14" r="1.500" fill="#5d85c9" stroke="none" /><circle cx="17.500" cy="6" r="1.200" fill="#5d85c9" stroke="none" /></Ico></Tab>
      <Tab><MeshI s={25} /></Tab>
      <Tab><Ico s={25}><circle cx="12" cy="12" r="10" fill="#c8626a" stroke="none" /><path d="M12 12H3.500a8.500 8.500 0 0 0 8.500 8.500zM12 12h8.500A8.500 8.500 0 0 0 12 3.500z" fill="#1d1d1d" stroke="none" /></Ico></Tab>
    </div>
  </div>
);

const Field = ({ label, value, pos }: { label: string; value: string; pos: "t" | "m" | "b" }) => (
  <div className="h-[29px] flex items-center">
    <span className="w-[117px] text-right text-[#d0d0d0] shrink-0 pb-[2px]">{label}</span>
    <div className={"ml-[14px] w-[130px] h-[28px] bg-[#545454] flex items-center justify-center pb-[1px] text-[#e6e6e6] tabular-nums tracking-[0.8px] " + (pos === "t" ? "rounded-t-[5px]" : pos === "b" ? "rounded-b-[5px]" : "")}>{value}</div>
    <span className="ml-[4px]"><Lock /></span>
    <span className="ml-[15px]"><Dot /></span>
  </div>
);
const Trio = ({ first, vals, className }: { first: string; vals: string[]; className: string }) => (
  <div className={className}>
    <Field label={first} value={vals[0]} pos="t" />
    <Field label="Y" value={vals[1]} pos="m" />
    <Field label="Z" value={vals[2]} pos="b" />
  </div>
);
const PANELS = ["Relations", "Collections", "Instancing", "Motion Paths", "Shading", "Visibility", "Viewport Display"];

const Collapsed = ({ children }: { children: React.ReactNode }) => (
  <div className="mt-[2px] h-[36px] bg-[#3d3d3d] rounded-[6px] flex items-center pl-[11px] pr-[10px] gap-[6px] shrink-0">
    <ChevR />
    {children}
    <span className="ml-auto"><Grip /></span>
  </div>
);

const Properties = () => (
  <div className="flex-1 min-h-0 mt-[3px] rounded-[6px] overflow-hidden flex flex-col text-[16px] text-[#dcdcdc]">
    <div className="h-[37px] bg-[#303030] flex items-center shrink-0 pl-[12px]">
      <Seg className="w-[44px] h-[29px] bg-[#282828] rounded-[5px] gap-[1px]">
        <Ico s={26}><rect x="3" y="3.500" width="18" height="7" rx="3.500" fill={W} stroke="none" /><circle cx="16.500" cy="7" r="2" fill="#282828" stroke="none" /><rect x="3" y="13" width="18" height="7.500" rx="3.700" fill={W} stroke="none" /><circle cx="17" cy="16.700" r="2.500" fill="#282828" stroke="none" /></Ico>
        <ChevD s={10} />
      </Seg>
      <div className="ml-[52px] w-[172px] h-[27px] bg-[#1d1d1d] rounded-[5px] flex items-center pl-[6px] gap-[7px] text-[#666]"><SearchI />Search</div>
      <Seg className="ml-[80px] w-[28px] h-[27px] bg-[#282828] rounded-[5px]"><ChevD s={13} /></Seg>
    </div>
    <div className="flex-1 min-h-0 flex relative">
      <PropTabs />
      <div className="flex-1 bg-[#303030] pl-[11px] pr-[12px] overflow-hidden">
        <div className="h-[54px] flex items-center pl-[2px]">
          <ObjBox s={28} />
          <span className="ml-[9px] pb-[2px]">example</span>
          <span className="ml-auto mr-[3px]"><PinI s={24} /></span>
        </div>
        <div className="mt-[12px] h-[27px] flex rounded-[5px] overflow-hidden">
          <Seg className="w-[45px] bg-[#282828] gap-[1px]"><ObjBox s={26} /><ChevD s={11} /></Seg>
          <div className="flex-1 bg-[#1d1d1d] pl-[12px] pb-[1px] flex items-center text-[#e6e6e6]">example</div>
        </div>
        <div className="mt-[15px] h-[407px] bg-[#3d3d3d] rounded-[6px] flex flex-col shrink-0">
          <div className="h-[38px] shrink-0 flex items-center pl-[11px] pr-[10px] gap-[5px]">
            <ChevDL /><span>Transform</span><span className="ml-auto"><Grip /></span>
          </div>
          <Trio className="mt-[10px]" first="Location X" vals={["0 m", "0 m", "0 m"]} />
          <Trio className="mt-[8px]" first="Rotation X" vals={["90°", "0°", "0°"]} />
          <div className="h-[29px] mt-[6px] flex items-center">
            <span className="w-[117px] text-right shrink-0 text-[#d0d0d0] pb-[2px]">Mode</span>
            <div className="ml-[14px] w-[130px] h-[27px] rounded-[5px] bg-[#282828] flex items-center pl-[11px] pr-[5px] justify-between">XYZ Euler<ChevD s={13} /></div>
            <span className="ml-[41px]"><Dot /></span>
          </div>
          <Trio className="mt-[7px]" first="Scale X" vals={["19.715", "19.715", "19.715"]} />
          <div className="mt-[16px] h-[30px] flex items-center pl-[32px] gap-[5px]"><ChevR /><span className="tracking-[0.15px]">Delta Transform</span></div>
        </div>
        {PANELS.slice(0, 6).map((p) => (
          <Collapsed key={p}><span className="whitespace-nowrap">{p}</span></Collapsed>
        ))}
        <Collapsed>
          <span className="whitespace-nowrap tracking-[0.15px] [word-spacing:1px]">Tissue Texture Reaction<span className="mx-[3px]">-</span>Diffusion</span>
        </Collapsed>
        <Collapsed><span className="whitespace-nowrap">{PANELS[6]}</span></Collapsed>
      </div>
      <div className="absolute right-[6px] top-[13px] h-[694px] w-[3px] rounded-full bg-[#454545]" />
    </div>
  </div>
);

const Mouse = ({ side }: { side: "l" | "r" }) => (
  <svg width="20" height="26" viewBox="0 0 20 26" fill="none" stroke="#b0b0b0" strokeWidth="1.200" className="shrink-0">
    <rect x="2" y="1" width="16" height="24" rx="6" />
    {side === "l" ? <path d="M8 1H8a6 6 0 0 0-6 6v5h7V1z" fill="#b0b0b0" stroke="none" /> : <path d="M11 1a6 6 0 0 1 7 6v5h-7z" fill="#b0b0b0" stroke="none" />}
  </svg>
);
const StatusBar = () => (
  <div className="h-[34px] shrink-0 bg-[#181818] flex items-center text-[16px] text-[#a0a0a0] pl-[15px] pr-[19px]">
    <Mouse side="l" />
    <span className="ml-[7px] w-[69px]">Resize</span>
    <Mouse side="r" />
    <span className="ml-[2px]">Options</span>
    <span className="ml-auto">
      <svg width="26" height="26" viewBox="0 0 24 24" fill="none" stroke="#8a8a8a" strokeWidth="1.200"><circle cx="12" cy="12" r="9" /><path d="M3 12h18M12 3c-6 5-6 13 0 18M12 3c6 5 6 13 0 18M3 3l18 18" /></svg>
    </span>
    <span className="ml-[9px] text-[#8c8c8c]">| 4.3.2</span>
  </div>
);

export default function App() {
  return (
    <div className="w-[2308px] h-[1382px] flex flex-col overflow-hidden bg-[#181818] font-['Inter','Liberation_Sans',sans-serif] border-r-[2px] border-l border-[#e4e4e4]">
      <TitleBar />
      <TopBar />
      <div className="flex-1 min-h-0 flex pl-[2px]">
        <div className="w-[1900px] shrink-0 flex flex-col">
          <Viewport />
          <Timeline />
        </div>
        <div className="w-[398px] ml-[4px] shrink-0 flex flex-col">
          <Outliner />
          <Properties />
        </div>
      </div>
      <StatusBar />
    </div>
  );
}
